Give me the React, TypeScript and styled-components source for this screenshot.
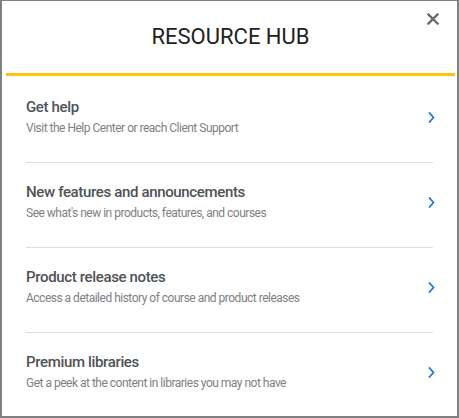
import React from "react";
import styled, { createGlobalStyle } from "styled-components";

const Global = createGlobalStyle`
  html, body { margin: 0; padding: 0; background: #ffffff; }
  body { font-family: Roboto, "Noto Sans", Arial, sans-serif; }
`;

const Panel = styled.div`
  position: relative;
  box-sizing: border-box;
  width: 459px;
  height: 418px;
  background: #ffffff;
  border-style: solid;
  border-color: #808080;
  border-width: 1px 2px 2px 2px;
  display: flex;
  flex-direction: column;
`;

const Header = styled.header`
  padding: 22px 0 22px;
  display: flex;
  justify-content: center;
  border-bottom: 3px solid #ffc20e;
  margin: 0 2px 0 4px;
`;

const Title = styled.h1`
  margin: 0;
  font-size: 22px;
  line-height: 28px;
  font-weight: 400;
  color: #222222;
  letter-spacing: 0;
`;

const CloseButton = styled.button`
  position: absolute;
  top: 10px;
  right: 16px;
  width: 16px;
  height: 16px;
  padding: 0;
  border: none;
  background: transparent;
  display: flex;
  align-items: center;
  justify-content: center;
  cursor: pointer;
`;

const List = styled.ul`
  list-style: none;
  margin: 0 24px;
  padding: 2px 0 0;
`;

const Item = styled.li<{ $last?: boolean }>`
  display: flex;
  align-items: center;
  justify-content: space-between;
  padding: 19px 0 25px;
  border-bottom: ${(p) => (p.$last ? "none" : "1px solid #dcdde6")};
  cursor: pointer;
`;

const Text = styled.div`
  display: flex;
  flex-direction: column;
`;

const ItemTitle = styled.div`
  font-size: 15px;
  line-height: 20px;
  font-weight: 500;
  letter-spacing: -0.35px;
  color: #4e5358;
`;

const ItemSub = styled.div`
  margin-top: 2px;
  font-size: 12px;
  line-height: 18px;
  letter-spacing: -0.5px;
  color: #808080;
`;

const ChevronBox = styled.span`
  display: flex;
  margin-right: -2px;
`;

const Chevron = () => (
  <ChevronBox>
    <svg width="7" height="11" viewBox="0 0 7 11" aria-hidden="true">
      <polyline
        points="1.5,1 5.5,5.5 1.5,10"
        fill="none"
        stroke="#1a73e8"
        strokeWidth="1.8"
        strokeLinecap="round"
        strokeLinejoin="round"
      />
    </svg>
  </ChevronBox>
);

const CloseIcon = () => (
  <svg width="12" height="12" viewBox="0 0 12 12" aria-hidden="true">
    <path
      d="M1.5 1.5 L10.5 10.5 M10.5 1.5 L1.5 10.5"
      stroke="#6b6b6b"
      strokeWidth="2.4"
      strokeLinecap="square"
    />
  </svg>
);

const items = [
  { title: "Get help", sub: "Visit the Help Center or reach Client Support" },
  {
    title: "New features and announcements",
    sub: "See what's new in products, features, and courses",
  },
  {
    title: "Product release notes",
    sub: "Access a detailed history of course and product releases",
  },
  {
    title: "Premium libraries",
    sub: "Get a peek at the content in libraries you may not have",
  },
];

export default function App() {
  return (
    <>
      <Global />
      <Panel>
        <Header>
          <Title>RESOURCE HUB</Title>
        </Header>
        <CloseButton aria-label="Close">
          <CloseIcon />
        </CloseButton>
        <List>
          {items.map((it, i) => (
            <Item key={it.title} $last={i === items.length - 1}>
              <Text>
                <ItemTitle>{it.title}</ItemTitle>
                <ItemSub>{it.sub}</ItemSub>
              </Text>
              <Chevron />
            </Item>
          ))}
        </List>
      </Panel>
    </>
  );
}
